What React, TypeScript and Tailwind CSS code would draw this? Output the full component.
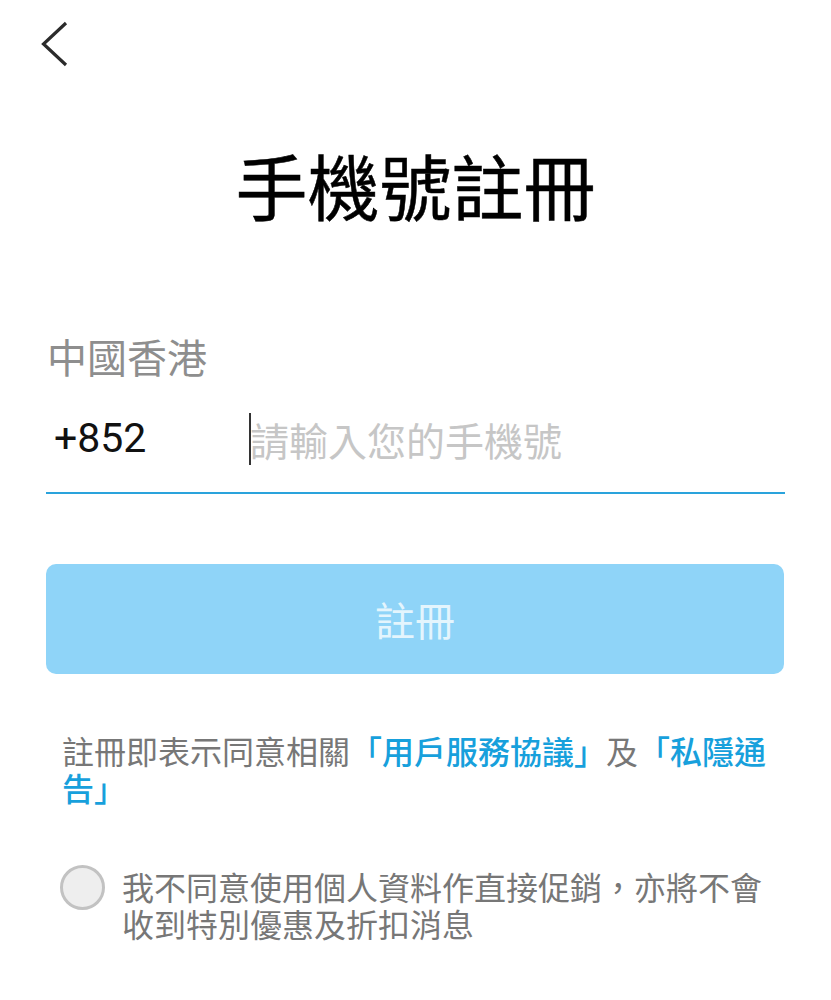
import React, { useState } from 'react';

const cjk = { fontFamily: '"Noto Sans CJK TC", "Noto Sans", sans-serif' };

export default function App() {
  const [optOut, setOptOut] = useState(false);
  const [phone, setPhone] = useState('');

  return (
    <div className="w-full min-h-screen bg-white" style={cjk}>
      {/* back */}
      <div className="h-[88px] pl-[40px] pt-[21px]">
        <button className="block w-[30px] h-[46px]" aria-label="返回">
          <svg width="30" height="46" viewBox="0 0 30 46" fill="none">
            <path d="M26 2 L3.5 23 L26 44" stroke="#2b2b2b" strokeWidth="3.2" strokeLinecap="butt" strokeLinejoin="miter" />
          </svg>
        </button>
      </div>

      <h1 className="mt-[60px] text-center text-[72px] leading-[72px] font-normal text-black [-webkit-text-stroke:0.5px_#000]">手機號註冊</h1>

      <div className="mt-[116px] px-[47px] text-[40px] leading-[40px] text-[#8e8e8e]">中國香港</div>

      <div className="mx-[46px] mt-[10px] h-[108px] flex items-center border-b-2 border-[#2aa3dc]">
        <span className="w-[203px] pl-[8px] text-[41px] text-[#111]" style={{ fontFamily: 'Roboto, "Liberation Sans", sans-serif' }}>+852</span>
        <div className="relative flex-1 flex items-center h-[52px]">
          <span className="absolute left-0 top-0 h-[52px] w-[2px] bg-[#333]" />
          <input
            value={phone}
            onChange={e => setPhone(e.target.value)}
            placeholder="請輸入您的手機號"
            className="w-full pl-[1px] text-[39px] text-[#111] placeholder:text-[#c6c6c6] outline-none bg-transparent"
            style={cjk}
          />
        </div>
      </div>

      <button className="mx-[46px] mt-[70px] h-[110px] w-[738px] rounded-[10px] bg-[#8fd4f8] text-[40px] text-[#e4f5fd] flex items-center justify-center" style={cjk}>
        註冊
      </button>

      <p className="mt-[58px] px-[62px] text-[32px] leading-[37px] text-[#777]">
        註冊即表示同意相關<span className="text-[#17a0dc] font-medium">「用戶服務協議」</span>及<span className="text-[#17a0dc] font-medium">「私隱通告」</span>
      </p>

      <div className="mt-[62px] pl-[60px] pr-[40px] flex items-start gap-[17px]">
        <button
          onClick={() => setOptOut(v => !v)}
          className="mt-[-3px] shrink-0 w-[45px] h-[45px] rounded-full border-[3px] border-[#c2c2c2] bg-[#eeeeee] flex items-center justify-center"
        >
          {optOut && <span className="w-[20px] h-[20px] rounded-full bg-[#17a0dc]" />}
        </button>
        <p className="text-[32px] leading-[37px] text-[#777]">我不同意使用個人資料作直接促銷，亦將不會收到特別優惠及折扣消息</p>
      </div>
    </div>
  );
}
